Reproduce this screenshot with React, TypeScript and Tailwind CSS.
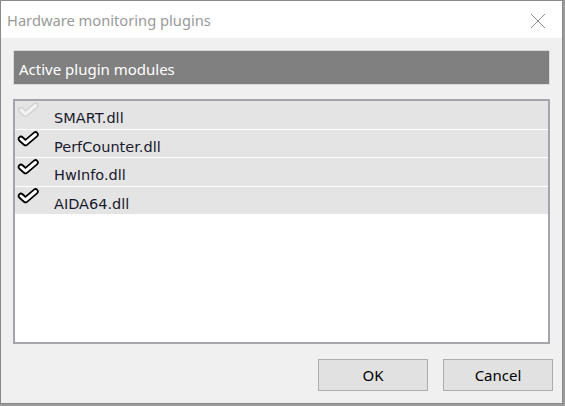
import React from "react";

function Check({ faint }: { faint?: boolean }) {
  const d = "M4 8 L8.5 12 L18.5 3.5";
  return (
    <svg width="22" height="16" viewBox="0 0 22 16" className="shrink-0">
      {faint ? (
        <>
          <path d={d} fill="none" stroke="#d2d2d2" strokeWidth="6" strokeLinecap="round" strokeLinejoin="round" />
          <path d={d} fill="none" stroke="#f2f2f2" strokeWidth="3.2" strokeLinecap="round" strokeLinejoin="round" />
        </>
      ) : (
        <>
          <path d={d} fill="none" stroke="#000" strokeWidth="6.4" strokeLinecap="round" strokeLinejoin="round" />
          <path d={d} fill="none" stroke="#fff" strokeWidth="3" strokeLinecap="round" strokeLinejoin="round" />
        </>
      )}
    </svg>
  );
}

const items = [
  { name: "SMART.dll", faint: true },
  { name: "PerfCounter.dll" },
  { name: "HwInfo.dll" },
  { name: "AIDA64.dll" },
];

export default function App() {
  return (
    <div className="w-[565px] h-[406px] bg-[#9a9a9a] overflow-hidden" style={{ fontFamily: '"Noto Sans", sans-serif' }}>
      <div className="w-[563px] h-[404px] border border-[#8a8a8a] bg-[#f0f0f0] flex flex-col">
        <div className="h-[37px] bg-white flex items-center justify-between pl-[6px] pr-[16px] shrink-0">
          <span className="text-[14.7px] text-[#999999] leading-none pt-[2px]">Hardware monitoring plugins</span>
          <svg width="16" height="16" viewBox="0 0 16 16" className="mt-[2px]">
            <path d="M1 1 L15 15 M15 1 L1 15" stroke="#909090" strokeWidth="1" />
          </svg>
        </div>
        <div className="flex flex-col px-[12px] pt-[12px]">
          <div className="h-[35px] bg-[#808080] border border-[#dadada] flex items-center pl-[5px]">
            <span className="text-[15px] text-white leading-none pt-[3px]">Active plugin modules</span>
          </div>
          <div className="mt-[14px] h-[245px] border-2 border-[#a3a5ab] bg-white flex flex-col">
            {items.map((it) => (
              <div key={it.name} className="h-[28.5px] bg-[#e4e4e4] border-b border-white flex items-start pl-[2px]">
                <div className="pt-[1px] w-[37px]">
                  <Check faint={it.faint} />
                </div>
                <span
                  className="text-[14.5px] text-[#1a1a2e] leading-none pt-[10px]"
                  style={{ fontFamily: '"DejaVu Sans", sans-serif' }}
                >
                  {it.name}
                </span>
              </div>
            ))}
          </div>
        </div>
        <div className="flex justify-end gap-[15px] pr-[9px] mt-[15px]">
          <button className="w-[110px] h-[32px] bg-[#e1e1e1] border border-[#adadad] text-[15px] text-black">OK</button>
          <button className="w-[110px] h-[32px] bg-[#e1e1e1] border border-[#adadad] text-[15px] text-black">Cancel</button>
        </div>
      </div>
    </div>
  );
}
